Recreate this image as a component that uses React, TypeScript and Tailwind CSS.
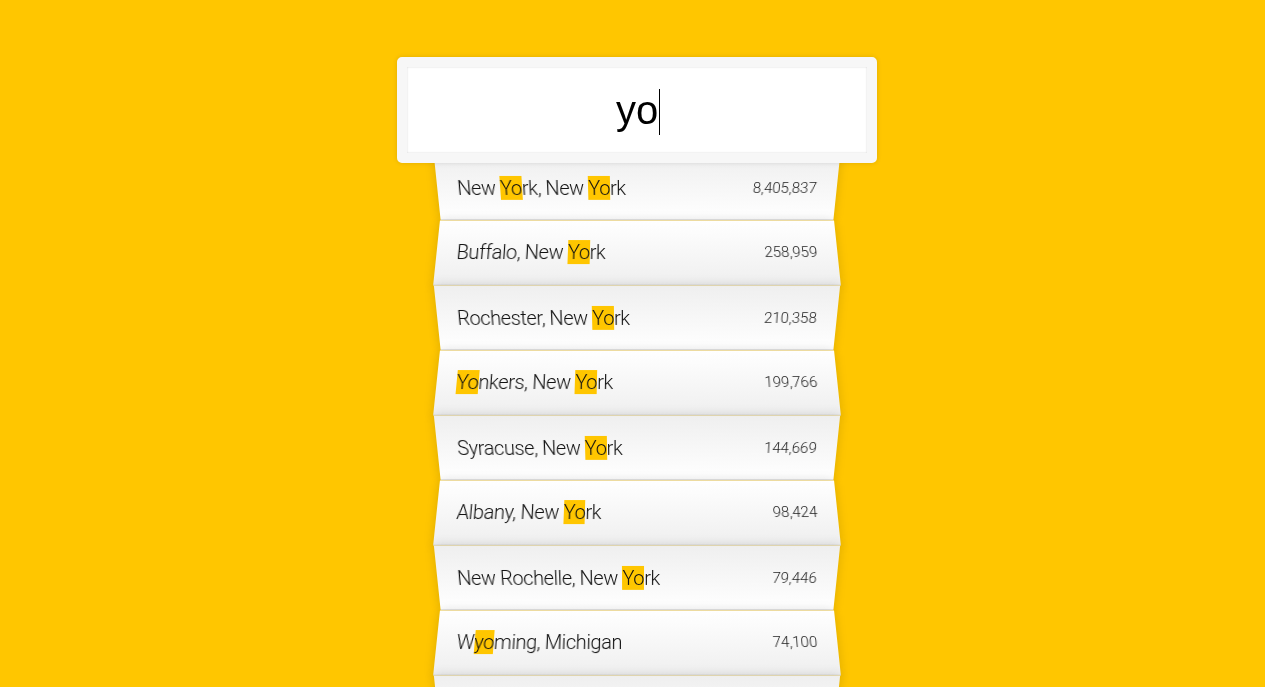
const cities = [
  { name: 'New York, New York', pop: '8,405,837' },
  { name: 'Buffalo, New York', pop: '258,959' },
  { name: 'Rochester, New York', pop: '210,358' },
  { name: 'Yonkers, New York', pop: '199,766' },
  { name: 'Syracuse, New York', pop: '144,669' },
  { name: 'Albany, New York', pop: '98,424' },
  { name: 'New Rochelle, New York', pop: '79,446' },
  { name: 'Wyoming, Michigan', pop: '74,100' },
  { name: 'Mount Vernon, New York', pop: '68,224' },
]

const query = 'yo'

function Highlight({ text }: { text: string }) {
  const parts = text.split(new RegExp(`(${query})`, 'gi'))
  return (
    <>
      {parts.map((p, i) =>
        p.toLowerCase() === query ? (
          <span key={i} className="bg-[#ffc600]">
            {p}
          </span>
        ) : (
          <span key={i}>{p}</span>
        ),
      )}
    </>
  )
}

export default function App() {
  return (
    <div className="h-[687px] overflow-hidden bg-[#ffc600] pl-[9px] font-['Roboto','Liberation_Sans',sans-serif] font-light">
      <form className="mx-auto mt-[47px] w-[400px]">
        <div className="relative top-[10px] z-10 -ml-[40px] w-[480px] rounded-[5px] border-[10px] border-[#f7f7f7] bg-white p-[20px] text-center font-['Liberation_Sans',sans-serif] text-[40px] font-normal leading-[46px] text-black shadow-[0_0_5px_rgba(0,0,0,0.12),inset_0_0_2px_rgba(0,0,0,0.19)]">
          <span className="relative">
            yo
            <span className="absolute -right-[2px] top-[1px] h-[46px] w-px bg-black" />
          </span>
        </div>
        <ul className="relative">
          {cities.map((c, i) => (
            <li
              key={c.name}
              className={
                'flex items-center justify-between border-b border-[#d8d8d8] px-[20px] py-[20px] text-[20px] leading-[24px] tracking-[-0.4px] text-[#111] shadow-[0_0_10px_rgba(0,0,0,0.14)] ' +
                (i % 2 === 0
                  ? 'bg-linear-to-t from-white to-[#efefef] [transform:perspective(100px)_rotateX(-3deg)_translateY(3px)]'
                  : 'bg-linear-to-b from-white to-[#efefef] [transform:perspective(100px)_rotateX(3deg)_translateY(2px)_scale(1.001)]')
              }
            >
              <span>
                <Highlight text={c.name} />
              </span>
              <span className="text-[15px] tracking-normal text-[#222]">{c.pop}</span>
            </li>
          ))}
        </ul>
      </form>
    </div>
  )
}
